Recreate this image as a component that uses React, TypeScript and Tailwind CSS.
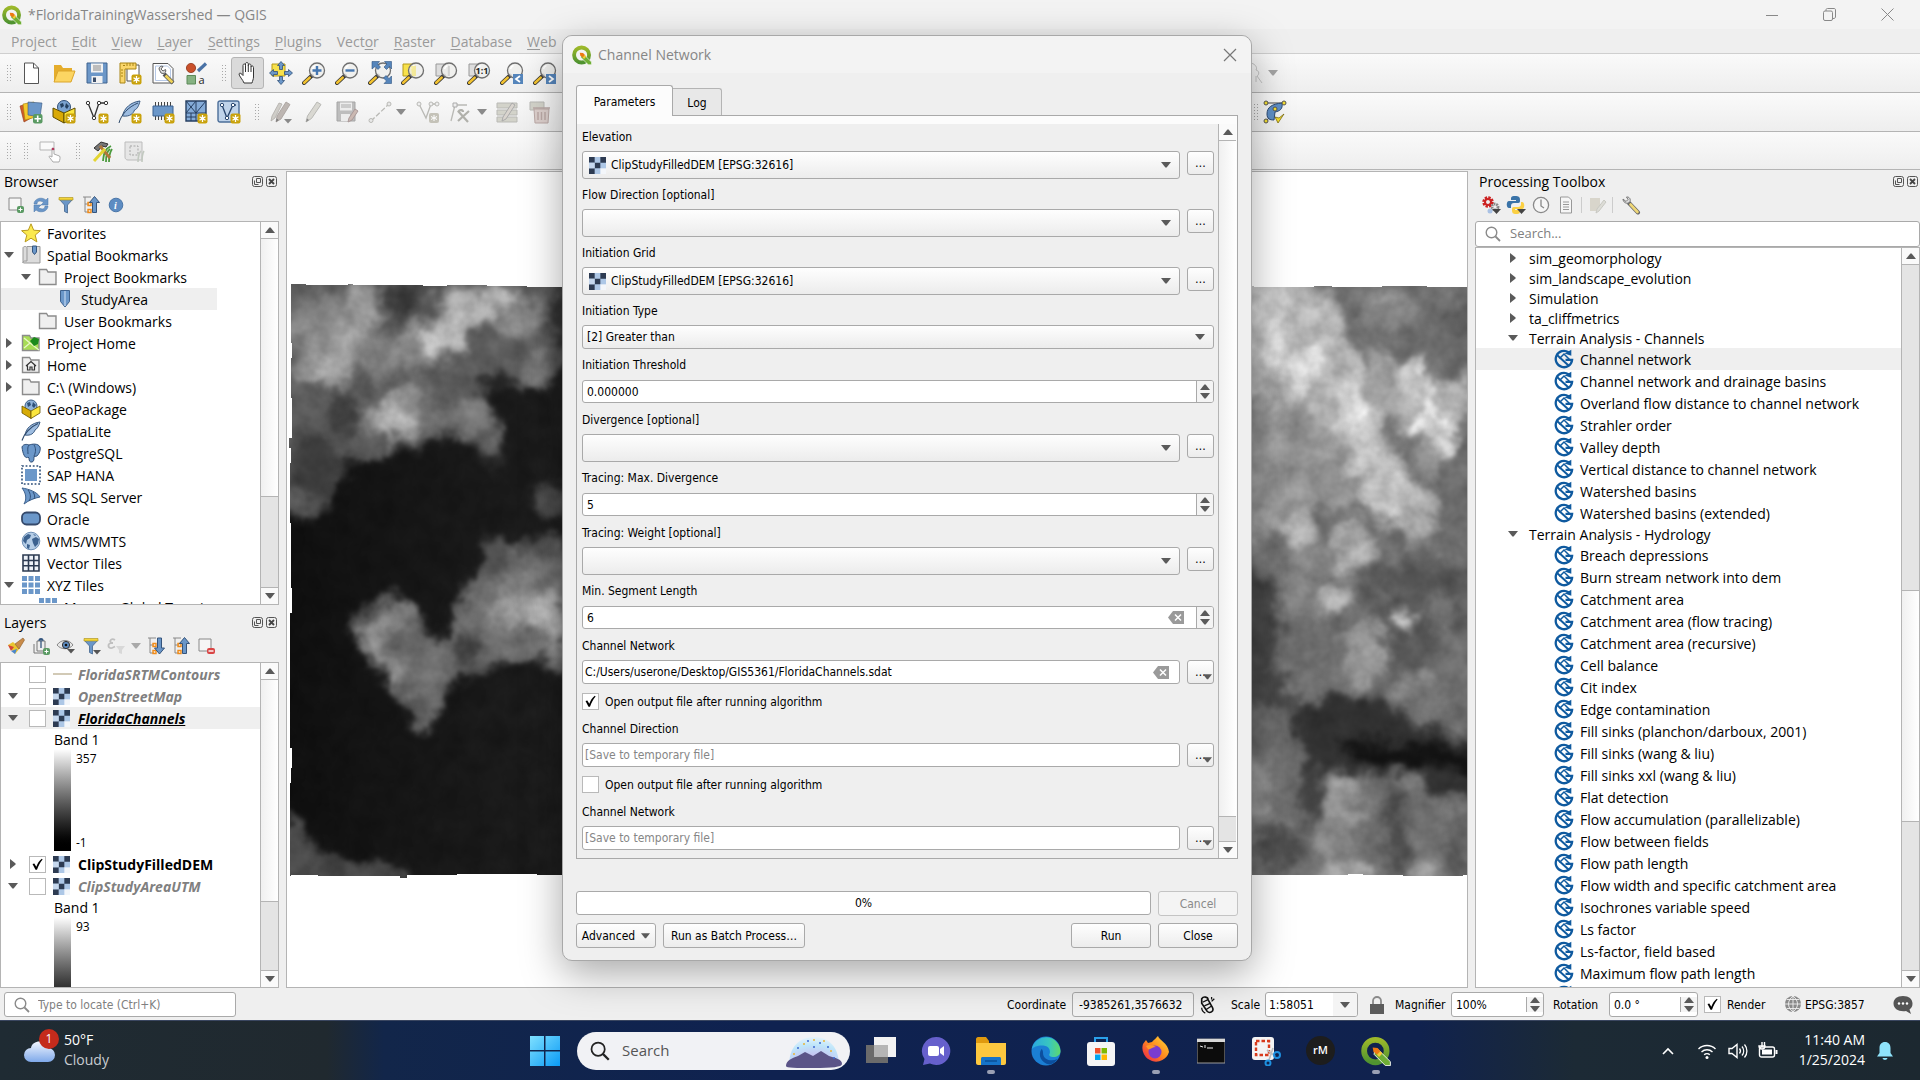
import React from "react";

type Kids = { children?: React.ReactNode };

/* ---------- small drawing helpers ---------- */

function Ic({ children, s = 24, vb = 24 }: Kids & { s?: number; vb?: number }) {
  return (
    <svg width={s} height={s} viewBox={`0 0 ${vb} ${vb}`} fill="none" aria-hidden="true" className="shrink-0">
      {children}
    </svg>
  );
}

const Down = ({ c = "#5a5a5a", w = 10 }: { c?: string; w?: number }) => (
  <svg width={w} height={6} viewBox="0 0 10 6" aria-hidden="true" className="shrink-0"><path d="M0 0h10L5.6 5.6h-1.2z" fill={c} /></svg>
);
const Up = ({ w = 10 }: { w?: number }) => (
  <svg width={w} height={6} viewBox="0 0 10 6" aria-hidden="true" className="shrink-0"><path d="M0 6h10L5.6 .4h-1.2z" fill="#5a5a5a" /></svg>
);
const Right = () => (
  <svg width={6} height={10} viewBox="0 0 6 10" aria-hidden="true"><path d="M0 0v10l5.6-4.4v-1.2z" fill="#5a5a5a" /></svg>
);

const Star = () => (
  <g>
    <rect x="13.500" y="13.500" width="10" height="10" rx="2" fill="#c9a20c" />
    <path d="M18.500 15v7M15.500 16.800l6 3.400M21.500 16.800l-6 3.400" stroke="#fff" strokeWidth="1.300" />
    <circle cx="18.500" cy="18.500" r="1.600" fill="#fff" />
  </g>
);

const Lens = ({ children }: Kids) => (
  <g>
    <path d="M2 22l8-7.500" stroke="#333" strokeWidth="4" strokeLinecap="round" />
    <path d="M2.200 21.800l5.500-5.200" stroke="#f2c230" strokeWidth="2.600" strokeLinecap="round" />
    <circle cx="15" cy="9.500" r="7.500" fill="#eeeeec" fillOpacity=".85" stroke="#6f6f6f" strokeWidth="1.300" />
    <path d="M10.500 8a5 5 0 0 1 3-3.500" stroke="#fff" strokeWidth="1.400" />
    {children}
  </g>
);

const QLogo = ({ s }: { s: number }) => (
  <Ic s={s}>
    <defs>
      <linearGradient id="qg" x1="0" y1="0" x2="0" y2="1"><stop offset="0" stopColor="#9cb82a" /><stop offset="1" stopColor="#4f9330" /></linearGradient>
    </defs>
    <circle cx="11.500" cy="12" r="9" stroke="url(#qg)" strokeWidth="4.600" />
    <path d="M11 11l3 .2 9.500 9.300v3.200h-4l-9-9z" fill="#6fae35" stroke="#fff" strokeWidth=".7" />
    <path d="M9.300 9.200l4 .4 2.200 2.500-2.800 2.800-2.800-2.600z" fill="#ee7913" />
    <path d="M12.700 14.900l2.800-2.800 1.700 1.700-2.700 2.900z" fill="#f8c832" />
  </Ic>
);

const Raster = ({ s = 17 }: { s?: number }) => (
  <Ic s={s} vb={18}>
    <path d="M0 0h18v18H0z" fill="#adc7e6" />
    <path d="M0 0h6v6H0zM12 0h6v6h-6zM6 6h6v6H6zM0 12h6v6H0z" fill="#2d3b52" />
    <path d="M12 12h6v6h-6z" fill="#f3f6fa" />
    <path d="M0 6h6v6H0z" fill="#c6d8ee" />
  </Ic>
);

const Saga = () => (
  <Ic s={20} vb={20}>
    <path d="M14.500 3.200A8.200 8.200 0 1 0 18.100 10.800H11.500" stroke="#0f5a9f" strokeWidth="2.300" />
    <path d="M10.500 4.600l6.800-3.800v6z" fill="#0f5a9f" />
    <path d="M3 6l11.500 10.500" stroke="#0f5a9f" strokeWidth="2" />
    <path d="M5.500 9.500l4.500-4.500 5.500 5.500" stroke="#0f5a9f" strokeWidth="1.500" />
  </Ic>
);

const Folder = ({ children, c = "#efefef" }: Kids & { c?: string }) => (
  <Ic s={20} vb={20}>
    <path d="M1.500 2.500h7l1.500 2.500h8v12.500h-16.500z" fill={c} stroke="#8c8c8c" strokeWidth="1.400" />
    {children}
  </Ic>
);

const Globe = ({ s = 20 }: { s?: number }) => (
  <Ic s={s} vb={20}>
    <circle cx="10" cy="10" r="8.800" fill="#b5cde6" stroke="#6d8fb5" />
    <path d="M3 6l4-3 3 1-1 3-3 2-1 4-3-3zM11 8l4-2 3 2-1 5-3 3-2-4zM6 13l3 1-1 4-2-1zM12 3l3 1-1 1z" fill="#3c628f" />
  </Ic>
);

const GeoPack = ({ s = 20 }: { s?: number }) => (
  <Ic s={s} vb={20}>
    <circle cx="10" cy="7" r="6" fill="#8fb3d9" stroke="#3c5f88" />
    <path d="M6 4l3-1 1 3-3 2zM12 3l3 3-2 3-2-2z" fill="#2e5078" />
    <path d="M1 7l9 5v7.500L1 14z" fill="#d7ab06" stroke="#6b5600" strokeWidth=".8" />
    <path d="M19 7l-9 5v7.500l9-5.500z" fill="#fbe63e" stroke="#6b5600" strokeWidth=".8" />
  </Ic>
);

const Feather = ({ s = 20 }: { s?: number }) => (
  <Ic s={s} vb={20}>
    <path d="M19 1C11 2 5 7 4 14c6 1 9-2 10-5 2-1 4-4 5-8z" fill="#9dbce0" stroke="#3b5a80" />
    <path d="M1 19.500C3 13 9 6 17 2.500" stroke="#2f4a6c" strokeWidth="1.200" />
  </Ic>
);

const FilterIc = ({ s = 20, menu = false }: { s?: number; menu?: boolean }) => (
  <Ic s={s} vb={20}>
    <path d="M3 4h14l-5.500 6v8l-3-1.500V10z" fill="#6a96c8" stroke="#43658d" strokeWidth=".8" />
    <path d="M3 2.500h14v2.500H3z" fill="#f3d53a" stroke="#a88d16" strokeWidth=".6" />
    {menu && <path d="M12 14h8l-4 4.500z" fill="#555" />}
  </Ic>
);

const TreeArrow = ({ up }: { up: boolean }) => (
  <Ic s={20} vb={20}>
    <path d="M2 2h8M4 2v15h4M4 9h4" stroke="#888" />
    <path d="M7 7.500h3v3H7zM7 14.500h3v3H7z" stroke="#f28c18" strokeWidth="1.400" />
    {up ? <path d="M13.500 1.500l5 6h-3v10h-4v-10h-3z" fill="#6a96c8" stroke="#35547c" /> : <path d="M13.500 18l5-6h-3V2h-4v10h-3z" fill="#6a96c8" stroke="#35547c" />}
  </Ic>
);

/* ---------- shared widgets ---------- */

const Handle = ({ w = "w-[14px]" }: { w?: string }) => (
  <div className={`flex shrink-0 items-center justify-center pl-1 ${w}`}>
    <div className="h-[18px] w-[6px] bg-[radial-gradient(#a8a8a8_1px,transparent_1px)] bg-[size:3px_3px]" />
  </div>
);

function TB({ label, children, on = false, w = "w-[33px]" }: Kids & { label: string; on?: boolean; w?: string }) {
  return (
    <button aria-label={label} className={`flex h-8 shrink-0 items-center justify-center ${w} ${on ? "rounded-[3px] border border-[#b5b5b5] bg-[#dadada]" : ""}`}>
      {children}
    </button>
  );
}

function ScrollBar({ before, thumb, after }: { before: string; thumb: string; after: string }) {
  return (
    <div className="flex w-[18px] shrink-0 flex-col border-l border-[#b4b4b4] bg-[#e4e4e4]">
      <button aria-label="Scroll up" className="flex h-[17px] shrink-0 items-center justify-center border-b border-[#b4b4b4] bg-[#fafafa]"><Up /></button>
      <div className={before} />
      <div className={`border-[#b4b4b4] bg-linear-to-r from-[#f0f0f0] to-white ${thumb}`} />
      <div className={after} />
      <button aria-label="Scroll down" className="flex h-[17px] shrink-0 items-center justify-center border-t border-[#b4b4b4] bg-[#fafafa]"><Down /></button>
    </div>
  );
}

function DockTitle({ text }: { text: string }) {
  return (
    <div className="flex h-[20px] shrink-0 items-center gap-[3px] pr-[2px] pl-[4px]">
      <h2 className="flex-1 text-[14px]">{text}</h2>
      <button aria-label={`Float ${text}`}>
        <Ic s={11} vb={11}><rect x=".5" y=".5" width="10" height="10" rx="2" stroke="#555" /><path d="M4.500 2.500h4v4h-4zM2.500 4.500v4h4" stroke="#555" /></Ic>
      </button>
      <button aria-label={`Close ${text}`}>
        <Ic s={11} vb={11}><rect x=".5" y=".5" width="10" height="10" rx="2" stroke="#555" /><path d="M3 3l5 5M8 3l-5 5" stroke="#444" strokeWidth="1.800" /></Ic>
      </button>
    </div>
  );
}

const DockTools = ({ children }: Kids) => (
  <div className="flex h-[30px] shrink-0 items-center gap-[5px] pb-[3px] pl-[6px]">{children}</div>
);

function Check({ id, checked = false }: { id: string; checked?: boolean }) {
  return (
    <span className="relative inline-flex h-[17px] w-[17px] shrink-0">
      <input id={id} aria-label={id} type="checkbox" defaultChecked={checked} className="peer h-[17px] w-[17px] appearance-none border border-[#b9b9b9] bg-white" />
      <svg viewBox="0 0 17 17" className="pointer-events-none absolute inset-0 hidden peer-checked:block" aria-hidden="true">
        <path d="M3.500 8l1.800-.5 2 3.200C8.500 7.500 10 5 12.800 2.800l.8.7C11 6.500 9.500 9.500 8 13.800H6.500z" fill="#000" />
      </svg>
    </span>
  );
}

/* ---------- toolbars ---------- */

const gray = "#b9b9b5";

function Toolbars() {
  const bar = "flex items-center border-b border-[#b4b4b4] bg-linear-to-b from-[#fafafa] to-[#eeeeee]";
  return (
    <div>
      <div className={`${bar} h-[39px]`}>
        <Handle />
        <TB label="New project"><Ic><path d="M5.500 2h9l5 5v15.500h-14z" fill="#fff" stroke="#555" /><path d="M14.500 2v5h5" stroke="#555" /></Ic></TB>
        <TB label="Open project"><Ic><path d="M2 21V4h7l2 3h9v4" fill="#e5ad2c" /><path d="M2 21l4-11h17l-4 11z" fill="#fcd562" stroke="#dba52a" /></Ic></TB>
        <TB label="Save project"><Ic><path d="M2 2h20v20H2z" fill="#6c97c8" stroke="#3f628e" /><path d="M6 2.500h12v9H6zM6.500 15h11v7h-11z" fill="#f2f2f2" /><path d="M8 5h8M8 7h8M8 9h8" stroke="#888" /><path d="M8 16.500h3V21H8z" fill="#3d4f6b" /></Ic></TB>
        <TB label="New print layout"><Ic><path d="M9 4h12v16H9z" fill="#fff" stroke="#555" /><path d="M2 2h16v6H7v14H2z" fill="#fad66b" stroke="#a88414" /><path d="M5 4.500h2M5 9h-2M5 12h-2M5 15h-2M9 2v3M12 2v3M15 2v3" stroke="#a88414" /><Star /></Ic></TB>
        <TB label="Layout manager"><Ic><path d="M2 2.500h15l5 5V22H2z" fill="#fff" stroke="#555" /><path d="M4.500 5h12l3 3v11.500h-15z" stroke="#b6c8e6" /><path d="M8 8c0-2 2-3.500 4-2.500L10 8l2 2 2.500-1.500c1 2-.5 4-2.500 4L10 12z" fill="#ddd" stroke="#555" strokeWidth=".9" /><path d="M13 13l9 9" stroke="#555" strokeWidth="4" /><path d="M14.500 14.500L21.500 21.500" stroke="#efd258" strokeWidth="2.600" /></Ic></TB>
        <TB label="Style manager"><Ic><circle cx="7" cy="7" r="4.600" fill="#c9502b" stroke="#8f3417" strokeWidth=".8" /><path d="M14 10l8-7.500" stroke="#4a72a6" strokeWidth="3.200" /><path d="M3 14.500h8.500V23H3z" fill="#86b282" stroke="#5c8a59" /><text x="14.500" y="22.500" fontSize="11" fontFamily="Open Sans" fill="#222">a</text></Ic></TB>
        <Handle w="w-[19px]" />
        <TB label="Pan map" on><Ic><path d="M8 22c-1-3-5-7-5-9 .5-1.500 2-1 4 1.500V4.500c0-2 2.500-2 2.500 0V3c0-2 2.800-2 2.800 0v1.500c0-2 2.700-2 2.700 0V6c.3-1.600 2.500-1.400 2.500.6V16c0 2-1 4-1.500 6z" fill="#fff" stroke="#333" /><path d="M9.500 4.500V11M12.300 4v7M15 6v5" stroke="#333" /></Ic></TB>
        <TB label="Pan to selection"><Ic><path d="M3 3h13v12H3z" fill="#f7e14b" stroke="#b49a1a" /><path d="M12 .5l3.500 4h-2v4h-3v-4h-2zM12 23.500l3.500-4h-2v-4h-3v4h-2zM.5 12l4-3.500v2h4v3h-4v2zM23.500 12l-4-3.500v2h-4v3h4v2z" fill="#6b97c9" stroke="#30507a" strokeWidth=".8" /></Ic></TB>
        <TB label="Zoom in"><Ic><Lens><path d="M15 5v9M10.500 9.500h9" stroke="#4576b0" strokeWidth="2.400" /></Lens></Ic></TB>
        <TB label="Zoom out"><Ic><Lens><path d="M10.500 9.500h9" stroke="#4576b0" strokeWidth="2.400" /></Lens></Ic></TB>
        <TB label="Zoom full"><Ic><Lens><path d="M4 .500h7.500L9.500 3l3 3-2.500 2.500-3-3-3 2.500zM23.500 .500h-7l2.500 2.500-3 3 2.500 2.500 3-3 2 2.500zM23.500 22.500h-7.500l2.500-2.500-3-3 2.500-2.500 3 3 2.500-2.500z" fill="#5585bb" stroke="#2f5482" strokeWidth=".6" /></Lens></Ic></TB>
        <TB label="Zoom to selection"><Ic><path d="M2 3h12v12H2z" fill="#f7e14b" stroke="#b49a1a" /><Lens><path d="M10 5h5v10h-4z" fill="#f5e88a" opacity=".8" /></Lens></Ic></TB>
        <TB label="Zoom to layer"><Ic><path d="M2 3h12v12H2z" fill="#ddd" stroke="#999" /><Lens><path d="M15 5v10" stroke="#bbb" /></Lens></Ic></TB>
        <TB label="Zoom to native resolution"><Ic><path d="M2 3h10v12H2z" fill="#ddd" stroke="#999" /><Lens><text x="8.500" y="13" fontSize="9" fontWeight="700" fontFamily="Open Sans" fill="#222">1:1</text></Lens></Ic></TB>
        <TB label="Zoom last"><Ic><Lens /><path d="M13 13h10v10H13z" fill="#5585bb" /><path d="M20 15l-4 3 4 3" stroke="#fff" strokeWidth="1.800" /></Ic></TB>
        <TB label="Zoom next"><Ic><Lens /><path d="M13 13h10v10H13z" fill="#5585bb" /><path d="M16 15l4 3-4 3" stroke="#fff" strokeWidth="1.800" /></Ic></TB>
        <div className="ml-[681px] flex items-center gap-[2px]">
          <Ic><path d="M8 2c4 0 8 4 6 7 4 1 3 5 1 6l5 7M14 15v6" stroke="#c4c4c4" /></Ic>
          <Down c="#a5a5a5" />
        </div>
      </div>
      <div className={`${bar} h-[39px]`}>
        <Handle />
        <TB label="Data source manager"><Ic><path d="M1 6l10-3 3 14-9 5z" fill="#d05a2a" stroke="#8f3b15" strokeWidth=".6" /><path d="M4 4l11-2 2 15-11 3z" fill="#f4c92c" stroke="#a8850c" strokeWidth=".6" /><path d="M9 2l14 1-2 14-12-2z" fill="#6b97c9" stroke="#35567f" strokeWidth=".6" /><rect x="14" y="14" width="9.500" height="9.500" rx="2" fill="#5a9a63" /><path d="M18.700 15.500v6.500M15.500 18.700h6.500" stroke="#fff" strokeWidth="1.600" /></Ic></TB>
        <TB label="New GeoPackage layer"><Ic><circle cx="12" cy="7" r="6.500" fill="#7ba3d0" stroke="#2f4f78" /><path d="M8 4l3-1 1 3-3 2zM14 3l3 3-2 3-2-2z" fill="#24405f" /><path d="M1 8l11 5v10L1 17z" fill="#d9a905" stroke="#5f4d00" /><path d="M23 8l-11 5v10l11-6z" fill="#fbe63e" stroke="#5f4d00" /><Star /></Ic></TB>
        <TB label="New shapefile layer"><Ic><path d="M3 3l6 15 5-15h8" stroke="#333" strokeWidth="1.300" /><circle cx="3" cy="3" r="1.700" fill="#fff" stroke="#333" /><circle cx="9" cy="18" r="1.700" fill="#fff" stroke="#333" /><circle cx="14" cy="3" r="1.700" fill="#fff" stroke="#333" /><circle cx="21" cy="3" r="1.700" fill="#fff" stroke="#333" /><Star /></Ic></TB>
        <TB label="New SpatiaLite layer"><Ic><path d="M22 1C13 2 6 8 4.500 16c8 1 11-3 12-6 3-1 4.500-5 5.500-9z" fill="#9dbce0" stroke="#3b5a80" /><path d="M1 23C3 15 10 7 20 3" stroke="#2f4a6c" /><Star /></Ic></TB>
        <TB label="New temporary scratch layer"><Ic><path d="M4.500 2v18M7.500 2v18M10.500 2v18M13.500 2v18M16.500 2v18M19.500 2v18" stroke="#444" /><path d="M2 6h20v10H2z" fill="#6b97c9" stroke="#3b608f" /><Star /></Ic></TB>
        <TB label="New mesh layer"><Ic><path d="M2 1h20v20H2z" fill="#84abd8" stroke="#263f61" strokeWidth="1.400" /><path d="M2 13h20M12 1v20M2 1l10 12L22 1M12 1L2 13M2 17h10M7 13v8" stroke="#263f61" /><Star /></Ic></TB>
        <TB label="New virtual layer"><Ic><rect x="1" y="1" width="21" height="21" rx="2" fill="#bfd3ea" stroke="#4b6d98" strokeWidth="1.400" /><path d="M5 5l5 13 6-13h3" stroke="#29466e" strokeWidth="1.300" /><circle cx="5" cy="5" r="1.700" fill="#fff" stroke="#29466e" /><circle cx="10" cy="18" r="1.700" fill="#fff" stroke="#29466e" /><circle cx="16" cy="5" r="1.700" fill="#fff" stroke="#29466e" /><Star /></Ic></TB>
        <Handle w="w-[19px]" />
        <TB label="Current edits"><Ic><path d="M2 21l1-5L10 3l3 1-7 14z" fill="#cfcdc8" stroke="#b0aca8" strokeWidth=".8" /><path d="M7 22l1-6L17 2l4 2.500L12 19z" fill="#bdb6b2" stroke="#a59d99" strokeWidth=".8" /><path d="M7 22l.6-3.500 2 1.500z" fill="#777" /><path d="M15 19h8l-4 4.500z" fill="#888" /></Ic></TB>
        <TB label="Toggle editing"><Ic><path d="M4 22l1.500-6L15 2l4 2.500-9.500 14z" fill="#d9d8d2" stroke={gray} /><path d="M4 22l1-3.500 2 1.500z" fill="#888" /></Ic></TB>
        <TB label="Save edits"><Ic><path d="M2 2h18v19H2z" fill="#bdbdbd" stroke="#a5a5a5" /><path d="M5 2.500h12v8H5zM6 14h9v7H6z" fill="#ececec" /><path d="M6 5h10M6 7h10" stroke="#aaa" /><path d="M13 22l1-4 6-9 3 2-6 9z" fill="#cbb9b2" stroke="#a99" /></Ic></TB>
        <TB label="Add feature"><Ic><path d="M3 21L21 4" stroke={gray} strokeDasharray="5 2" strokeWidth="1.300" /><circle cx="3" cy="20.500" r="2" fill="#e8e8e8" stroke={gray} /><circle cx="21" cy="4" r="2" fill="#e8e8e8" stroke={gray} /></Ic></TB>
        <div className="w-[15px]"><Down c="#8a8a8a" /></div>
        <TB label="Add polygon"><Ic><path d="M3 4l7 14 5-14h7" stroke={gray} strokeWidth="1.300" /><circle cx="3" cy="4" r="2" fill="#eee" stroke={gray} /><circle cx="15" cy="4" r="2" fill="#eee" stroke={gray} /><circle cx="21" cy="4" r="2" fill="#eee" stroke={gray} /><rect x="13" y="13" width="10" height="10" rx="2" fill="#c4c2b8" /><path d="M18 15v6M15 16.500l6 3M21 16.500l-6 3" stroke="#fff" /></Ic></TB>
        <TB label="Vertex tool"><Ic><path d="M2 21L6 5h12" stroke={gray} strokeWidth="1.300" /><path d="M4 3h4v4H4z" fill="#eee" stroke="#aaa" /><path d="M9 11l10 11M20 11L9 21M9 12c2-3 5-2 5 0" stroke="#b0b0aa" strokeWidth="2.200" /></Ic></TB>
        <div className="w-[13px]"><Down c="#8a8a8a" /></div>
        <TB label="Modify attributes"><Ic><path d="M2 3h20v5H2zM2 10h20v5H2zM2 17h20v5H2z" fill="#d3d3ca" stroke={gray} /><path d="M7 21l1-4L17 3l3 2-9 14z" fill="#d9d4ce" stroke="#aaa" /></Ic></TB>
        <TB label="Delete selected"><Ic><path d="M2 2h14v8H2z" fill="#d3d3ca" stroke={gray} /><path d="M6 9h15l-1 14H7z" fill="#ddd0cd" stroke="#bba9a6" /><path d="M5 8h17M10 12v8M13.500 12v8M17 12v8" stroke="#bba9a6" strokeWidth="1.400" /></Ic></TB>
        <div className="ml-[692px] flex items-center">
          <Handle w="w-[12px]" />
          <TB label="Topology checker" w="w-[30px]"><Ic><path d="M3 3l18 0M3 22l8-12" stroke="#444" /><path d="M4 14c0-7 5-10 15-11 1 6-2 8-7 9l-1 8c-4 0-7-1-7-6z" fill="#5f8fc6" stroke="#2c4a72" /><path d="M12 17l3 6 6-9-5 4z" fill="#f6e030" stroke="#6b5a00" strokeWidth=".7" /><circle cx="3" cy="3" r="2" fill="#f6e030" stroke="#555" /><circle cx="21" cy="3" r="2" fill="#f6e030" stroke="#555" /><circle cx="12" cy="9" r="2" fill="#f6e030" stroke="#555" /><circle cx="3" cy="21" r="2" fill="#f6e030" stroke="#555" /></Ic></TB>
        </div>
      </div>
      <div className={`${bar} h-[38px]`}>
        <Handle />
        <Handle w="w-[19px]" />
        <TB label="Edit in place"><Ic><path d="M2 3h14v8H2z" fill="#fafafa" stroke="#b5b5b5" /><path d="M14 10v8l-2-1c-1.500 0-1 1.500 0 2l3 4h6c1-2 1.500-5 .5-6L16 15v-5c0-1.300-2-1.300-2 0z" fill="#fff" stroke="#aaa" /><circle cx="15" cy="10" r="1.300" fill="#b33a5e" /></Ic></TB>
        <Handle w="w-[20px]" />
        <TB label="GRASS tools"><Ic><path d="M12 22c1-9 2-12 8-15M15 23c0-7 1-11 4-13M18 23c0-6 1-10 3-13" stroke="#4a9a3c" strokeWidth="1.800" /><path d="M3 9l7-6 7 2-2 3-4-1-4 5z" fill="#777" stroke="#333" /><path d="M9 7l10 12" stroke="#b0773a" strokeWidth="3" /><path d="M3 22l11-12" stroke="#e3d532" strokeWidth="3" /></Ic></TB>
        <TB label="GRASS region" w="w-[29px]"><Ic><path d="M3 3h17v18H6c-3 0-3-3-3-3z" fill="#e6e6e6" stroke="#bcbcbc" /><path d="M8 7h8v9H8z" stroke="#a5a5a5" strokeDasharray="2 1.500" /><path d="M16 23c0-6 1-9 3-11M20 23c0-5 0-8 2-11" stroke="#c2c9c0" strokeWidth="1.600" /></Ic></TB>
      </div>
    </div>
  );
}

/* ---------- browser dock ---------- */

type BrowserRow = { t: string; d?: 0 | 1 | 2; a?: "open" | "shut"; icon: React.ReactNode; sel?: boolean };

const grid9 = (
  <Ic s={20} vb={20}><path d="M1 1h5v5H1zM7.500 1h5v5h-5zM14 1h5v5h-5zM1 7.500h5v5H1zM7.500 7.500h5v5h-5zM14 7.500h5v5h-5zM1 14h5v5H1zM7.500 14h5v5h-5zM14 14h5v5h-5z" fill="#6b97c9" /></Ic>
);

const browserRows: BrowserRow[] = [
  { t: "Favorites", icon: <Ic s={20} vb={20}><path d="M10 .8l2.700 6.400 6.700.5-5.200 4.400 1.700 6.800L10 15.200l-5.900 3.700 1.700-6.800L.6 7.700l6.700-.5z" fill="#fbe94d" stroke="#b99a1e" /></Ic> },
  { t: "Spatial Bookmarks", a: "open", icon: <Ic s={20} vb={20}><path d="M2 3l4-2v15H18V2H10" fill="#e4e4e4" /><path d="M2 3c0-2 4-2 4 0v13H3.500C2 16 2 18 2 18zM6 1.500h13V18H2.500" fill="#dcdcdc" stroke="#999" /><path d="M11.500 1h4v6l-2 2.500-2-2.500z" fill="#6b97c9" stroke="#35567f" /></Ic> },
  { t: "Project Bookmarks", d: 1, a: "open", icon: <Folder /> },
  { t: "StudyArea", d: 2, sel: true, icon: <Ic s={20} vb={20}><path d="M5.500 1.500h9v11L10 18l-4.500-5.500z" fill="#6b97c9" stroke="#3f628e" /><path d="M10 2v15" stroke="#9fbde0" strokeWidth="2" /></Ic> },
  { t: "User Bookmarks", d: 1, icon: <Folder /> },
  { t: "Project Home", a: "shut", icon: <Folder c="#a8dc55"><path d="M3 15l6-5 9 7M9 10L3 5" stroke="#e9f7c8" strokeWidth="1.300" /><path d="M9 8l4-4 5 2-1 5-4 2z" fill="#1c8a1c" /></Folder> },
  { t: "Home", a: "shut", icon: <Folder><path d="M5 11l5-4.500 5 4.500M6.500 10.500V15h2.500v-3h2v3h2.500v-4.500" stroke="#333" strokeWidth="1.200" /></Folder> },
  { t: "C:\\ (Windows)", a: "shut", icon: <Folder /> },
  { t: "GeoPackage", icon: <GeoPack /> },
  { t: "SpatiaLite", icon: <Feather /> },
  { t: "PostgreSQL", icon: <Ic s={20} vb={20}><path d="M1 4c1-3 5-3 7-2 3-1 9-2 11 2 1 3-1 7-3 9l-3 .5c0 3 0 5-2 5.500-2 .5-3-1-3-4l-1-1c-2 2-5-1-6-10z" fill="#6b97c9" stroke="#2f4f78" /><path d="M8 2c-2 2-1 6-1 9M13 2c2 3 2 7 0 11" stroke="#2f4f78" /></Ic> },
  { t: "SAP HANA", icon: <Ic s={20} vb={20}><path d="M1 1h18v18H1z" stroke="#2f4f78" strokeWidth="1.600" strokeDasharray="1.800 1.800" /><path d="M4 4h12v12H4z" fill="#6b97c9" /></Ic> },
  { t: "MS SQL Server", icon: <Ic s={20} vb={20}><path d="M1 1c7 1 15 4 18 9-5 1-11 3-16 7 3-5 2-11-2-16z" fill="#6b97c9" stroke="#3f628e" /><path d="M7 3c3 4 3 8 1 11M12 5c2 3 2 5 1 7" stroke="#2f4f78" /></Ic> },
  { t: "Oracle", icon: <Ic s={20} vb={20}><rect x="1" y="3.500" width="18" height="12" rx="4.500" fill="#6b97c9" stroke="#35496b" strokeWidth="1.800" /></Ic> },
  { t: "WMS/WMTS", icon: <Globe /> },
  { t: "Vector Tiles", icon: <Ic s={20} vb={20}><path d="M2 2h16v16H2z" fill="#eef2f8" /><path d="M2 2h16v16H2zM7.500 2v16M12.800 2v16M2 7.500h16M2 12.800h16" stroke="#2d3b52" strokeWidth="1.600" /></Ic> },
  { t: "XYZ Tiles", a: "open", icon: grid9 },
  { t: "Mapzen Global Terrain", d: 1, icon: grid9 },
];

const indents = ["pl-0", "pl-[17px]", "pl-[34px]"];

function Browser() {
  return (
    <section className="flex h-[434px] shrink-0 flex-col">
      <DockTitle text="Browser" />
      <DockTools>
        <button aria-label="Add layer"><Ic s={20} vb={20}><path d="M3 3h12v12H3z" fill="#f6f6f6" stroke="#888" /><rect x="11" y="11" width="7" height="7" rx="2" fill="#5a9a63" /><path d="M14.500 12.500v4M12.500 14.500h4" stroke="#fff" /></Ic></button>
        <button aria-label="Refresh"><Ic s={20} vb={20}><path d="M3 9c0-5 7-8 12-4l2-2v7h-7l2.500-2.500C9 5 6 6 6 9zM17 11c0 5-7 8-12 4l-2 2v-7h7l-2.500 2.500C11 15 14 14 14 11z" fill="#6a96c8" stroke="#4a76a8" strokeWidth=".5" /></Ic></button>
        <button aria-label="Filter browser"><FilterIc /></button>
        <button aria-label="Collapse all"><TreeArrow up /></button>
        <button aria-label="Properties"><Ic s={20} vb={20}><circle cx="10" cy="10" r="6.800" fill="#5d8cc2" stroke="#4a76a8" /><text x="8" y="14" fontSize="10" fontStyle="italic" fontWeight="700" fontFamily="Liberation Serif" fill="#fff">i</text></Ic></button>
      </DockTools>
      <div className="flex min-h-0 flex-1 border border-[#b4b4b4] bg-white">
        <ul className="min-w-0 flex-1 overflow-hidden">
          {browserRows.map((r) => (
            <li key={r.t} className={`flex h-[22px] items-center ${indents[r.d ?? 0]} ${r.sel ? "mr-[43px] bg-[#efefef]" : ""}`}>
              <span className="flex w-[20px] shrink-0 justify-center pr-1">{r.a === "open" ? <Down /> : r.a === "shut" ? <Right /> : null}</span>
              {r.icon}
              <span className="ml-[6px] whitespace-nowrap">{r.t}</span>
            </li>
          ))}
        </ul>
        <ScrollBar before="h-0" thumb="h-[258px] border-b" after="flex-1" />
      </div>
    </section>
  );
}

/* ---------- layers dock ---------- */

function LayerRow({ name, arrow, checked, cls = "", sel, line }: { name: string; arrow?: "open" | "shut"; checked?: boolean; cls?: string; sel?: boolean; line?: boolean }) {
  return (
    <li className={`flex h-[22px] items-center ${sel ? "bg-[#efefef]" : ""}`}>
      <span className="flex w-[28px] shrink-0 justify-center pr-1">{arrow === "open" ? <Down /> : arrow === "shut" ? <Right /> : null}</span>
      <Check id={name} checked={checked} />
      <span className="ml-[7px] flex w-[19px] shrink-0">{line ? <span className="h-[2px] w-full bg-[#d2cab6]" /> : <Raster />}</span>
      <label htmlFor={name} className={`ml-[6px] font-bold whitespace-nowrap ${cls}`}>{name}</label>
    </li>
  );
}

function Band({ top, bottom }: { top: string; bottom?: string }) {
  return (
    <li className="pl-[53px]">
      <div className="h-[20px] leading-[22px]">Band 1</div>
      <div className="flex h-[104px] gap-[5px] pb-[2px]">
        <span className="w-[17px] bg-linear-to-b from-white to-black" />
        <span className="flex flex-col justify-between pt-[2px] text-[12px] leading-4">
          <span>{top}</span>
          {bottom && <span>{bottom}</span>}
        </span>
      </div>
    </li>
  );
}

function Layers() {
  return (
    <section className="flex min-h-0 flex-1 flex-col pt-[7px]">
      <DockTitle text="Layers" />
      <DockTools>
        <button aria-label="Open layer styling"><Ic s={20} vb={20}><path d="M2 9l5-3 7 6-5 6z" fill="#e9c531" /><path d="M2 9l3 6 3-4z" fill="#d64534" /><path d="M5 15l4 3 2-5z" fill="#4a86d0" /><path d="M9 8l8-6 1.500 2L13 13z" fill="#c98b4a" stroke="#8a5a24" strokeWidth=".6" /></Ic></button>
        <button aria-label="Add group"><Ic s={20} vb={20}><path d="M6 5h8v10H6zM3 8v9h9" fill="#eee" stroke="#777" /><path d="M10 12V3M8 5c0-3 4-3 4 0" stroke="#35567f" strokeWidth="1.300" /><rect x="12" y="12" width="7" height="7" rx="2" fill="#5a9a63" /><path d="M15.500 13.500v4M13.500 15.500h4" stroke="#fff" /></Ic></button>
        <button aria-label="Manage map themes"><Ic s={20} vb={20}><path d="M1 9c4-6 12-6 16 0-4 5-12 5-16 0z" fill="#e6e6e6" stroke="#888" /><circle cx="10" cy="9" r="3.600" fill="#5d8cc2" stroke="#333" /><circle cx="10" cy="9" r="1.300" fill="#111" /><path d="M11 13h8l-4 4.500z" fill="#555" /></Ic></button>
        <button aria-label="Filter legend"><FilterIc menu /></button>
        <button aria-label="Filter by expression"><Ic s={20} vb={20}><path d="M9 4C6 2 3 4 5 7c-4 1-3 6 1 5l3-1.500M5 7h2" stroke="#c0c0c0" strokeWidth="1.800" /><path d="M10 10h9l-3 4v4l-3-1v-3z" fill="#d8d8d8" /></Ic></button>
        <Down c="#a9a9a9" />
        <button aria-label="Expand all"><TreeArrow up={false} /></button>
        <button aria-label="Collapse all layers"><TreeArrow up /></button>
        <button aria-label="Remove layer"><Ic s={20} vb={20}><path d="M3 3h12v12H3z" fill="#f6f6f6" stroke="#888" /><rect x="11" y="12" width="8" height="6" rx="2" fill="#d94545" /><path d="M12.500 15h5" stroke="#fff" strokeWidth="1.400" /></Ic></button>
      </DockTools>
      <div className="flex min-h-0 flex-1 border border-[#b4b4b4] bg-white">
        <ul className="min-w-0 flex-1 overflow-hidden">
          <LayerRow name="FloridaSRTMContours" line cls="text-[#808080] italic" />
          <LayerRow name="OpenStreetMap" arrow="open" cls="text-[#808080] italic" />
          <LayerRow name="FloridaChannels" arrow="open" sel cls="italic underline" />
          <Band top="357" bottom="-1" />
          <LayerRow name="ClipStudyFilledDEM" arrow="shut" checked />
          <LayerRow name="ClipStudyAreaUTM" arrow="open" cls="text-[#808080] italic" />
          <Band top="93" />
        </ul>
        <ScrollBar before="h-0" thumb="h-[222px] border-b" after="flex-1" />
      </div>
    </section>
  );
}

/* ---------- map canvas: shaded elevation ---------- */

type Blob = [number, number, number, number, string];

const westPolys: [string, string][] = [
  ["-30,-40 900,-40 900,190 800,300 740,300 640,260 600,300 660,370 650,470 600,450 480,415 400,440 300,470 240,485 190,470 180,540 150,590 90,628 -30,600", "#5c5c5c"],
  ["215,890 240,860 350,820 390,835 440,920 480,940 520,905 570,780 600,760 620,690 650,675 700,710 740,700 770,670 870,700 870,1025 800,995 700,985 640,1000 520,1030 500,1060 460,1150 430,1165 390,1140 370,1090 300,1010 245,950", "#6c6c6c"],
  ["-30,1400 60,1390 90,1460 200,1490 370,1510 370,1600 -30,1600", "#4c4c4c"],
];
const westBlobs: Blob[] = [
  [130, 180, 110, 110, "#959595"], [240, 130, 60, 110, "#9c9c9c"], [150, 260, 60, 40, "#adadad"], [90, 90, 60, 30, "#7a7a7a"], [50, 210, 25, 50, "#666"],
  [310, 220, 80, 60, "#7c7c7c"], [420, 190, 80, 60, "#929292"], [490, 170, 70, 50, "#c4c4c4"], [540, 110, 60, 60, "#b5b5b5"],
  [650, 85, 80, 45, "#b8b8b8"], [720, 130, 60, 60, "#8c8c8c"], [360, 75, 55, 40, "#333"], [430, 50, 40, 20, "#3a3a3a"],
  [690, 200, 50, 30, "#5a5a5a"], [760, 250, 40, 45, "#7c7c7c"], [850, 120, 40, 90, "#282828"], [660, 280, 60, 20, "#2a2a2a"],
  [190, 370, 35, 70, "#343434"], [300, 380, 60, 50, "#909090"], [345, 375, 60, 50, "#c4c4c4"], [390, 320, 50, 40, "#8c8c8c"],
  [460, 265, 45, 25, "#565656"], [450, 370, 50, 35, "#767676"], [570, 375, 65, 50, "#7c7c7c"], [100, 500, 75, 90, "#363636"],
  [80, 350, 50, 40, "#5c5c5c"], [820, 580, 55, 45, "#525252"], [640, 485, 40, 20, "#2c2c2c"],
  [290, 935, 40, 60, "#949494"], [350, 870, 40, 40, "#808080"], [370, 940, 60, 30, "#5d5d5d"], [440, 1010, 50, 40, "#6a6a6a"],
  [350, 1010, 30, 40, "#8c8c8c"], [265, 885, 25, 25, "#4b4b4b"], [410, 1110, 30, 25, "#4a4a4a"], [560, 960, 35, 45, "#383838"],
  [700, 860, 70, 50, "#a0a0a0"], [730, 810, 60, 40, "#8c8c8c"], [800, 860, 50, 50, "#bcbcbc"], [830, 930, 30, 50, "#a2a2a2"],
  [650, 730, 40, 40, "#4f4f4f"], [770, 700, 60, 30, "#4e4e4e"], [610, 870, 40, 40, "#7a7a7a"], [150, 1515, 50, 20, "#363636"],
];
const eastPolys: [string, string][] = [
  ["-20,-40 150,-40 300,130 380,270 430,360 430,430 390,530 330,520 270,430 240,370 200,330 100,340 -20,300", "#b2b2b2"],
  ["-20,340 200,340 250,380 270,440 330,520 380,560 320,610 240,600 80,660 -20,620", "#929292"],
  ["390,190 450,220 560,340 540,420 480,400 400,340", "#a3a3a3"],
  ["-20,770 110,780 130,900 100,1000 180,1110 -20,1100", "#454545"],
  ["380,760 520,720 700,760 700,820 560,840 600,930 540,1010 460,1060 430,900 380,840", "#575757"],
  ["150,1110 290,1070 420,1080 520,1140 740,1200 740,1340 600,1330 500,1270 300,1270 200,1270", "#313131"],
  ["300,1190 610,1200 740,1245 740,1300 600,1245 480,1265 300,1220", "#121212"],
];
const eastBlobs: Blob[] = [
  [90, 100, 60, 90, "#cbcbcb"], [90, 190, 50, 50, "#d2d2d2"], [190, 250, 60, 50, "#e2e2e2"], [230, 110, 70, 50, "#bababa"],
  [340, 350, 45, 60, "#e4e4e4"], [390, 450, 45, 50, "#d2d2d2"], [290, 300, 50, 40, "#c2c2c2"], [450, 110, 90, 50, "#838383"],
  [440, 60, 60, 20, "#a5a5a5"], [620, 190, 80, 70, "#6a6a6a"], [660, 120, 40, 40, "#575757"], [600, 70, 60, 30, "#777"],
  [520, 280, 60, 40, "#c8c8c8"], [530, 240, 24, 24, "#f2f2f2"], [565, 320, 28, 28, "#ececec"], [585, 380, 52, 44, "#fff"],
  [600, 430, 45, 40, "#dcdcdc"], [650, 320, 50, 60, "#bbb"], [450, 570, 85, 65, "#d4d4d4"], [450, 510, 50, 40, "#c8c8c8"],
  [530, 620, 60, 70, "#b8b8b8"], [340, 700, 60, 70, "#bababa"], [180, 655, 60, 45, "#c2c2c2"], [50, 660, 30, 60, "#a5a5a5"],
  [640, 590, 60, 90, "#6c6c6c"], [560, 490, 50, 40, "#969696"], [440, 440, 30, 30, "#a0a0a0"], [230, 740, 70, 40, "#8c8c8c"],
  [100, 730, 50, 40, "#707070"], [190, 820, 80, 60, "#828282"], [290, 835, 50, 40, "#b8b8b8"], [370, 970, 70, 80, "#9f9f9f"],
  [220, 950, 100, 80, "#6d6d6d"], [210, 1050, 60, 30, "#777"], [495, 892, 26, 30, "#dcdcdc"], [430, 830, 40, 20, "#777"],
  [610, 860, 60, 50, "#6f6f6f"], [640, 980, 60, 80, "#707070"], [515, 1045, 45, 35, "#8c8c8c"], [580, 1090, 60, 35, "#777"],
  [660, 890, 25, 30, "#4d4d4d"], [100, 1190, 80, 60, "#6c6c6c"], [50, 1320, 45, 100, "#8e8e8e"], [210, 1320, 35, 80, "#3a3a3a"],
  [120, 1460, 80, 50, "#474747"], [310, 1350, 70, 70, "#9b9b9b"], [290, 1440, 60, 70, "#8e8e8e"], [390, 1330, 40, 60, "#6e6e6e"],
  [470, 1420, 35, 120, "#484848"], [560, 1410, 60, 90, "#747474"], [320, 1530, 80, 35, "#a6a6a6"], [550, 1530, 50, 35, "#9c9c9c"],
  [650, 1450, 30, 90, "#585858"],
];

function Terrain({ polys, blobs }: { polys: [string, string][]; blobs: Blob[] }) {
  return (
    <g>
      {polys.map(([p, f]) => <polygon key={p} points={p} fill={f} />)}
      {blobs.map(([x, y, rx, ry, f]) => <ellipse key={`${x}-${y}`} cx={x} cy={y} rx={rx} ry={ry} fill={f} fillOpacity=".85" />)}
      {polys.filter(([, f]) => f === "#121212").map(([p, f]) => <polygon key={p + "top"} points={p} fill={f} />)}
    </g>
  );
}

function MapCanvas() {
  return (
    <main className="min-w-0 flex-1 border border-[#b4b4b4] bg-white pt-[111px]">
      <svg viewBox="0 0 1180 595" className="block w-full" role="img" aria-label="Elevation raster">
        <defs>
          <filter id="cloud" x="-60" y="-60" width="1300" height="715" filterUnits="userSpaceOnUse" colorInterpolationFilters="sRGB">
            <feGaussianBlur stdDeviation="5" result="b" />
            <feTurbulence type="fractalNoise" baseFrequency="0.05" numOctaves="5" seed="7" result="n" />
            <feDisplacementMap in="b" in2="n" scale="26" xChannelSelector="R" yChannelSelector="G" result="d" />
            <feGaussianBlur in="d" stdDeviation="1.500" result="s" />
            <feTurbulence type="fractalNoise" baseFrequency="0.045" numOctaves="3" seed="21" />
            <feColorMatrix values="1 0 0 0 0  1 0 0 0 0  1 0 0 0 0  0 0 0 0 1" result="t" />
            <feComposite in="s" in2="t" operator="arithmetic" k1="0.400" k2="0.800" k3="0" k4="0" />
          </filter>
          <linearGradient id="sea" x1="0" y1="0" x2="1" y2="0"><stop offset="0" stopColor="#0a0a0a" /><stop offset=".15" stopColor="#121212" /><stop offset=".45" stopColor="#1c1c1c" /><stop offset="1" stopColor="#202020" /></linearGradient>
          <clipPath id="edge">
            <path d="M4 1h15v1h42v-1h5v1h70v1h24v-1h40v1h40v1h700l10-1h17v1h60v-1h18v1h50v-1h45v1h41V592h-5v1h-60v-1h-40v-1h-15v1h-100v-1h-30v1H250v-1h-80v1h-50v3h-7v-2H31v-1H4v1H3V500h1v-15h1v-20H3V330h2v-25H4V240H3V180h1v-15H2v-10h3v-40H4V75h1V60H4z" />
          </clipPath>
        </defs>
        <g clipPath="url(#edge)">
          <g filter="url(#cloud)">
            <rect x="-60" y="-60" width="740" height="715" fill="url(#sea)" />
            <rect x="680" y="-60" width="560" height="715" fill="#6e6e6e" />
            <g transform="translate(4 2) scale(.3333 .3954) translate(-33 -38)"><Terrain polys={westPolys} blobs={westBlobs} /></g>
            <g transform="translate(953 2) scale(.3333 .3954) translate(0 -38)"><Terrain polys={eastPolys} blobs={eastBlobs} /></g>
          </g>
        </g>
      </svg>
    </main>
  );
}

/* ---------- processing toolbox ---------- */

const toolRows: { t: string; k: "shut" | "open" | "item"; sel?: boolean }[] = [
  { t: "sim_geomorphology", k: "shut" }, { t: "sim_landscape_evolution", k: "shut" }, { t: "Simulation", k: "shut" }, { t: "ta_cliffmetrics", k: "shut" },
  { t: "Terrain Analysis - Channels", k: "open" },
  { t: "Channel network", k: "item", sel: true }, { t: "Channel network and drainage basins", k: "item" }, { t: "Overland flow distance to channel network", k: "item" },
  { t: "Strahler order", k: "item" }, { t: "Valley depth", k: "item" }, { t: "Vertical distance to channel network", k: "item" }, { t: "Watershed basins", k: "item" }, { t: "Watershed basins (extended)", k: "item" },
  { t: "Terrain Analysis - Hydrology", k: "open" },
  { t: "Breach depressions", k: "item" }, { t: "Burn stream network into dem", k: "item" }, { t: "Catchment area", k: "item" }, { t: "Catchment area (flow tracing)", k: "item" }, { t: "Catchment area (recursive)", k: "item" },
  { t: "Cell balance", k: "item" }, { t: "Cit index", k: "item" }, { t: "Edge contamination", k: "item" }, { t: "Fill sinks (planchon/darboux, 2001)", k: "item" }, { t: "Fill sinks (wang & liu)", k: "item" },
  { t: "Fill sinks xxl (wang & liu)", k: "item" }, { t: "Flat detection", k: "item" }, { t: "Flow accumulation (parallelizable)", k: "item" }, { t: "Flow between fields", k: "item" }, { t: "Flow path length", k: "item" },
  { t: "Flow width and specific catchment area", k: "item" }, { t: "Isochrones variable speed", k: "item" }, { t: "Ls factor", k: "item" }, { t: "Ls-factor, field based", k: "item" }, { t: "Maximum flow path length", k: "item" },
  { t: "", k: "item" },
];

const SearchIc = ({ s = 16, c = "#8a8a8a" }: { s?: number; c?: string }) => (
  <Ic s={s} vb={16}><circle cx="6.500" cy="6.500" r="5.300" stroke={c} strokeWidth="1.400" /><path d="M10.500 10.500l4.500 4.500" stroke={c} strokeWidth="1.800" /></Ic>
);

function Toolbox() {
  return (
    <section className="flex w-[445px] shrink-0 flex-col">
      <DockTitle text="Processing Toolbox" />
      <DockTools>
        <button aria-label="Models"><Ic s={20} vb={20}><circle cx="7" cy="7" r="4" stroke="#cc2222" strokeWidth="3.500" strokeDasharray="2.100 1" /><circle cx="7" cy="7" r="3" stroke="#cc2222" strokeWidth="2" /><circle cx="14" cy="12" r="3" stroke="#888" strokeWidth="2.800" strokeDasharray="1.700 .8" /><circle cx="9" cy="16" r="2.500" fill="#a9c1e4" /><path d="M11 14h9l-4.500 5z" fill="#444" /></Ic></button>
        <button aria-label="Scripts"><Ic s={20} vb={20}><path d="M9 1c-4 0-4 1-4 4h5v1H3c-3 0-3 7 0 7h2v-2c0-2 1-3 3-3h4c2 0 2-1 2-3 0-3-1-4-5-4z" fill="#3a73a8" /><path d="M10 19c4 0 4-1 4-4H9v-1h7c3 0 3-7 0-7h-1v2c0 2-1 3-3 3H8c-2 0-2 1-2 3 0 3 1 4 4 4z" fill="#fbd043" /><path d="M11 14h9l-4.500 5z" fill="#444" /></Ic></button>
        <button aria-label="History"><Ic s={20} vb={20}><circle cx="10" cy="10" r="7.600" fill="#f6f6f6" stroke="#888" strokeWidth="1.300" /><path d="M10 4.500V11l3 2" stroke="#888" strokeWidth="1.300" /></Ic></button>
        <button aria-label="Results viewer"><Ic s={20} vb={20}><path d="M4.500 2h8l3 3v13h-11z" fill="#f6f6f6" stroke="#999" /><path d="M7 7h6M7 9.500h6M7 12h6M7 14.500h6" stroke="#999" strokeWidth="1.200" /></Ic></button>
        <span className="h-4 w-px bg-[#ccc]" />
        <button aria-label="Edit features in place"><Ic s={20} vb={20}><path d="M3 3h10v9l-4 4H3z" fill="#d8d5cb" /><path d="M9 18l1-4 7-9 2 2-7 9z" fill="#dcdcd6" stroke="#c8c8c2" /></Ic></button>
        <span className="h-4 w-px bg-[#ccc]" />
        <button aria-label="Options" className="ml-[3px]"><Ic s={20} vb={20}><path d="M8 8l9 9.500" stroke="#666" strokeWidth="4" strokeLinecap="round" /><path d="M9.500 9.500l7 7.500" stroke="#efd777" strokeWidth="2.600" strokeLinecap="round" /><path d="M2 4c0 3 3 5 5.500 4L9 6.500C10 4 8 1.500 5.500 2L7 4.500 5 6.500z" fill="#ddd" stroke="#777" /></Ic></button>
      </DockTools>
      <div className="flex h-[26px] shrink-0 items-center gap-[9px] rounded-[3px] border border-[#a9a9a9] bg-white pl-[9px]">
        <SearchIc />
        <input aria-label="Search algorithms" placeholder="Search..." className="w-full text-[13px] outline-none placeholder:text-[#808080]" />
      </div>
      <div className="flex min-h-0 flex-1 border border-[#b4b4b4] bg-white">
        <ul className="min-w-0 flex-1 overflow-hidden">
          {toolRows.map((r) =>
            r.k === "item" ? (
              <li key={r.t} className={`flex h-[22px] items-center gap-[6px] pl-[78px] whitespace-nowrap ${r.sel ? "bg-[#efefef]" : ""}`}><Saga />{r.t}</li>
            ) : (
              <li key={r.t} className="flex h-[20px] items-center pl-[30px] whitespace-nowrap"><span className="flex w-[23px] pl-[2px]">{r.k === "shut" ? <span className="pl-[2px]"><Right /></span> : <Down />}</span>{r.t}</li>
            ),
          )}
        </ul>
        <ScrollBar before="h-[325px]" thumb="h-[232px] border-y" after="flex-1" />
      </div>
    </section>
  );
}

/* ---------- dialog ---------- */

const boxBase = "rounded-[3px] border border-[#a9a9a9]";
const btnBg = "bg-linear-to-b from-[#fefefe] to-[#ececec]";

function Label({ id, text }: { id: string; text: string }) {
  return <label htmlFor={id} className="block h-5 leading-[22px]">{text}</label>;
}

function Combo({ id, label, value, browse = true }: { id: string; label: string; value?: string; browse?: boolean }) {
  return (
    <div className="flex flex-col gap-[5px]">
      <Label id={id} text={label} />
      <div className="flex items-start gap-[7px]">
        <div className="relative flex min-w-0 flex-1 items-center">
          <select id={id} className={`w-full appearance-none ${boxBase} ${btnBg} ${browse ? "h-7" : "h-6"} ${browse && value ? "pl-[28px]" : "pl-[4px]"}`}>
            <option>{value ?? ""}</option>
          </select>
          {browse && value && <span className="pointer-events-none absolute left-[7px]"><Raster /></span>}
          <span className="pointer-events-none absolute right-[9px]"><Down /></span>
        </div>
        {browse && <button aria-label={`Browse ${label}`} className={`h-6 w-[27px] leading-5 ${boxBase} ${btnBg}`}>…</button>}
      </div>
    </div>
  );
}

const Clear = () => (
  <Ic s={17} vb={17}><path d="M5 2h11v13H5L0 8.500z" fill="#9a9a9a" /><path d="M7 5.500l6 6M13 5.500l-6 6" stroke="#fff" strokeWidth="1.500" /></Ic>
);

function Spin({ id, label, value, clear = false }: { id: string; label: string; value: string; clear?: boolean }) {
  return (
    <div className="flex flex-col gap-[5px]">
      <Label id={id} text={label} />
      <div className="flex h-[25px] items-center">
        <div className={`flex h-[23px] w-full overflow-hidden bg-white ${boxBase}`}>
          <input id={id} defaultValue={value} className="min-w-0 flex-1 pl-[4px] outline-none" />
          {clear && <button aria-label="Reset value" className="mr-[11px]"><Clear /></button>}
          <SpinArrows />
        </div>
      </div>
    </div>
  );
}

function SpinArrows() {
  return (
    <span className="flex w-[17px] shrink-0 flex-col items-center justify-center gap-[3px] border-l border-[#a9a9a9] bg-[#f4f4f4]">
      <button aria-label="Increase"><Up /></button>
      <button aria-label="Decrease"><Down /></button>
    </span>
  );
}

function Output({ id, label, value, open }: { id: string; label: string; value?: string; open?: boolean }) {
  return (
    <>
      <div className="flex flex-col gap-[5px]">
        <Label id={id} text={label} />
        <div className="flex gap-[7px]">
          <div className={`flex h-6 min-w-0 flex-1 items-center bg-white ${boxBase}`}>
            <input id={id} defaultValue={value} placeholder="[Save to temporary file]" className="min-w-0 flex-1 pl-[2px] outline-none placeholder:text-[#868686]" />
            {value && <button aria-label="Clear path" className="mr-[9px]"><Clear /></button>}
          </div>
          <button aria-label={`Choose file for ${id}`} className={`relative h-6 w-[27px] leading-5 ${boxBase} ${btnBg}`}>…<span className="absolute right-[1px] bottom-[3px]"><Down w={9} /></span></button>
        </div>
      </div>
      {open !== undefined && (
        <div className="flex h-6 items-center gap-[6px] pt-px">
          <Check id={`${id} open`} checked={open} />
          <label htmlFor={`${id} open`}>Open output file after running algorithm</label>
        </div>
      )}
    </>
  );
}

function Dialog() {
  const btn = `h-[25px] ${boxBase} ${btnBg}`;
  return (
    <div role="dialog" aria-label="Channel Network" className="absolute top-[35px] left-[562px] w-[690px] rounded-[10px] border border-[#a8a8a8] bg-[#efefef] shadow-[0_12px_40px_rgba(0,0,0,0.35)]">
      <header className="flex h-[37px] items-center rounded-t-[10px] bg-[#f3f3f3] pr-[14px] pl-[9px] [font-family:'Open_Sans',sans-serif]">
        <QLogo s={20} />
        <h1 className="ml-[6px] flex-1 text-[14px] text-[#868686]">Channel Network</h1>
        <button aria-label="Close dialog"><Ic s={14} vb={14}><path d="M1 1l12 12M13 1L1 13" stroke="#777" strokeWidth="1.200" /></Ic></button>
      </header>
      <div className="px-[13px] py-[12px] text-[12px] [font-family:'DejaVu_Sans_Condensed','Noto_Sans',sans-serif]">
        <div role="tablist" className="flex items-end">
          <button role="tab" aria-selected="true" className="relative z-10 -mb-px h-[31px] w-[97px] rounded-t-[3px] border border-b-0 border-[#a9a9a9] bg-[#fcfcfc] pt-[2px]">Parameters</button>
          <button role="tab" aria-selected="false" className="h-[27px] w-[49px] rounded-tr-[3px] border border-b-0 border-l-0 border-[#b4b4b4] bg-[#e8e8e8] pt-[2px]">Log</button>
        </div>
        <div className="flex border border-[#a9a9a9] bg-[#efefef]">
          <div className="flex min-w-0 flex-1 flex-col">
            <div className="h-[8px] bg-[#fcfcfc]" />
            <div className="flex flex-col gap-[5px] pt-[2px] pr-[4px] pb-[8px] pl-[5px]">
              <Combo id="elevation" label="Elevation" value="ClipStudyFilledDEM [EPSG:32616]" />
              <Combo id="flow" label="Flow Direction [optional]" />
              <Combo id="grid" label="Initiation Grid" value="ClipStudyFilledDEM [EPSG:32616]" />
              <Combo id="type" label="Initiation Type" value="[2] Greater than" browse={false} />
              <Spin id="threshold" label="Initiation Threshold" value="0.000000" />
              <Combo id="divergence" label="Divergence [optional]" />
              <Spin id="maxdiv" label="Tracing: Max. Divergence" value="5" />
              <Combo id="weight" label="Tracing: Weight [optional]" />
              <Spin id="minseg" label="Min. Segment Length" value="6" clear />
              <Output id="channels" label="Channel Network" value="C:/Users/userone/Desktop/GIS5361/FloridaChannels.sdat" open />
              <Output id="direction" label="Channel Direction" open={false} />
              <Output id="network" label="Channel Network" />
            </div>
          </div>
          <div className="flex bg-[#fcfcfc] pt-[8px] pr-[1px]"><ScrollBar before="h-0" thumb="flex-1 border-b" after="h-[24px]" /></div>
        </div>
        <div className="mt-[32px] flex gap-[7px]">
          <div role="progressbar" aria-label="Progress" aria-valuenow={0} className={`flex h-6 flex-1 items-center justify-center bg-white ${boxBase}`}>0%</div>
          <button disabled className="h-[25px] w-[80px] rounded-[3px] border border-[#c4c4c4] bg-[#f4f4f4] text-[#8a8a8a]">Cancel</button>
        </div>
        <div className="mt-[7px] flex gap-[7px]">
          <button className={`${btn} flex w-[80px] items-center justify-center gap-[6px]`}>Advanced <Down w={9} /></button>
          <button className={`${btn} w-[142px]`}>Run as Batch Process…</button>
          <span className="flex-1" />
          <button className={`${btn} w-[80px]`}>Run</button>
          <button className={`${btn} w-[80px]`}>Close</button>
        </div>
      </div>
    </div>
  );
}

/* ---------- status bar ---------- */

function StatusBar() {
  const field = `flex h-[25px] shrink-0 items-center overflow-hidden bg-white ${boxBase}`;
  return (
    <footer className="flex h-[32px] shrink-0 items-center bg-[#efefef] pt-px pr-[7px] pl-[4px] text-[12px] [font-family:'DejaVu_Sans_Condensed','Noto_Sans',sans-serif]">
      <div className={`${field} w-[232px] gap-[8px] pl-[9px]`}>
        <SearchIc />
        <input aria-label="Locate" placeholder="Type to locate (Ctrl+K)" className="w-full outline-none placeholder:text-[#808080]" />
      </div>
      <label htmlFor="coord" className="ml-auto w-[65px]">Coordinate</label>
      <input id="coord" defaultValue="-9385261,3576632" className={`h-[25px] w-[122px] bg-[#f2f2f2] pl-[6px] ${boxBase}`} />
      <button aria-label="Toggle extents" className="mx-[4px] flex w-[20px] justify-center"><Ic s={18} vb={20}><path d="M3 3c2-3 7-2 7 1l5 9c2 4-3 7-6 4L3 8z" stroke="#111" strokeWidth="1.800" /><path d="M4 7l6-3M6 11l7-3M8 15l6-4M3 13c0 3 2 5 4 6M14 1v3M17 3l-3 3" stroke="#111" strokeWidth="1.400" /></Ic></button>
      <label htmlFor="scale" className="ml-[9px] w-[34px]">Scale</label>
      <div className={`${field} w-[93px]`}>
        <input id="scale" defaultValue="1:58051" className="min-w-0 flex-1 pl-[3px] outline-none" />
        <span className="flex h-full w-[24px] items-center justify-center bg-[#f4f4f4]"><Down /></span>
      </div>
      <button aria-label="Lock scale" className="mr-[9px] ml-[10px]"><Ic s={18} vb={18}><path d="M5 9V5a4 4 0 0 1 8 0v4" stroke="#8a8a8a" strokeWidth="1.800" /><path d="M2 8h14v10H2z" fill="#5c5c5c" /></Ic></button>
      <label htmlFor="mag" className="w-[56px]">Magnifier</label>
      <div className={`${field} w-[93px]`}><input id="mag" defaultValue="100%" className="min-w-0 flex-1 pl-[4px] outline-none" /><SpinArrows /></div>
      <label htmlFor="rot" className="ml-[9px] w-[56px]">Rotation</label>
      <div className={`${field} w-[89px]`}><input id="rot" defaultValue="0.0 °" className="min-w-0 flex-1 pl-[4px] outline-none" /><SpinArrows /></div>
      <div className="ml-[6px] flex items-center gap-[6px]"><Check id="render" checked /><label htmlFor="render" className="w-[41px]">Render</label></div>
      <button className="ml-[15px] flex items-center gap-[2px]">
        <Ic s={20} vb={20}><circle cx="10" cy="9" r="8" fill="#8a8a8a" /><path d="M2 9h16M10 1v17M4 4.500h12M4 13.500h12M10 1c-6 5-6 11 0 16M10 1c6 5 6 11 0 16" stroke="#efefef" strokeWidth=".9" /></Ic>
        <span className="w-[63px] text-left">EPSG:3857</span>
      </button>
      <button aria-label="Messages" className="ml-[25px]"><Ic s={20} vb={20}><path d="M10 1c6 0 9.500 3 9.500 7.500 0 3-1 4.500-3 6l1.500 4.500-5-3c-7 1-12.500-2-12.500-7.500C.5 4 4 1 10 1z" fill="#555" /><circle cx="6" cy="8.500" r="1.200" fill="#fff" /><circle cx="10" cy="8.500" r="1.200" fill="#fff" /><circle cx="14" cy="8.500" r="1.200" fill="#fff" /></Ic></button>
    </footer>
  );
}

/* ---------- taskbar ---------- */

function TaskButton({ label, children, dot = false }: Kids & { label: string; dot?: boolean }) {
  return (
    <button aria-label={label} className="relative flex h-full w-[55px] shrink-0 items-center justify-center">
      {children}
      {dot && <span className="absolute bottom-[6px] h-[4px] w-[8px] rounded-full bg-[#9aa0b4]" />}
    </button>
  );
}

function Taskbar() {
  return (
    <nav className="flex h-[60px] shrink-0 items-center border-t border-[#3a4660] bg-[linear-gradient(90deg,#1f2b33_0%,#20292f_17%,#12264a_20%,#0f2250_40%,#10224e_74%,#1c2a35_82%,#1c2830_100%)] text-[14px] text-white">
      <button aria-label="Weather" className="relative ml-[24px] flex w-[160px] items-center gap-[8px] pb-px text-left">
        <svg width="32" height="32" viewBox="0 0 32 32" aria-hidden="true"><defs><linearGradient id="cl" x1="0" y1="0" x2="0" y2="1"><stop offset="0" stopColor="#f1f6ff" /><stop offset="1" stopColor="#7fa9ea" /></linearGradient></defs><path d="M7 28a7 7 0 0 1 0-14c1-8 15-9 17 0a7 7 0 0 1 0 14z" fill="url(#cl)" /></svg>
        <span className="absolute -top-px left-[15px] flex h-5 w-5 items-center justify-center rounded-full bg-[#c42b1c] text-[12px]">1</span>
        <span className="leading-5"><span className="block">50°F</span><span className="block text-[#c8ccd0]">Cloudy</span></span>
      </button>
      <div className="ml-[333px] flex h-full items-center">
        <TaskButton label="Start"><Ic s={30} vb={30}><defs><linearGradient id="wn" x1="0" y1="0" x2="1" y2="1"><stop offset="0" stopColor="#7fe0ff" /><stop offset="1" stopColor="#0a9af5" /></linearGradient></defs><path d="M0 0h14v14H0zM15.500 0H30v14H15.500zM0 15.500h14V30H0zM15.500 15.500H30V30H15.500z" fill="url(#wn)" /></Ic></TaskButton>
        <div className="mr-[3px] ml-[5px] flex h-[38px] w-[273px] items-center overflow-hidden rounded-full bg-[#f1f2f5] pl-[13px]">
          <SearchIc s={20} c="#222" />
          <input aria-label="Search" placeholder="Search" className="ml-[12px] min-w-0 flex-1 text-[15px] outline-none placeholder:text-[#555]" />
          <svg width="60" height="36" viewBox="0 0 60 36" className="mr-[6px]" aria-hidden="true">
            <defs><radialGradient id="sky" cx=".5" cy=".9" r=".9"><stop offset="0" stopColor="#c9a8ec" /><stop offset=".7" stopColor="#bfe6fa" /><stop offset="1" stopColor="#e6f3fb" /></radialGradient></defs>
            <path d="M5 33C5 14 15 4 30 4s25 10 25 29z" fill="url(#sky)" />
            <path d="M2 33c0-6 7-8 12-10l7-4 8 4 8-5 8 5c6 2 13 3 13 8 0 3-10 4-28 4S2 35 2 33z" fill="#5b5488" />
            <g fill="#3b68d0"><circle cx="14" cy="15" r="1" /><circle cx="24" cy="8" r="1" /><circle cx="36" cy="10" r="1" /><circle cx="30" cy="14" r="1" /><circle cx="50" cy="25" r="1" /><circle cx="44" cy="14" r="1" /></g>
            <g fill="#e8b43a"><circle cx="20" cy="11" r="1" /><circle cx="40" cy="8" r="1" /><circle cx="10" cy="21" r="1" /><circle cx="47" cy="18" r="1" /><circle cx="30" cy="7" r="1" /></g>
          </svg>
        </div>
        <TaskButton label="Task view"><Ic s={30} vb={30}><path d="M0 9h22v18H0z" fill="#6b6b6b" /><path d="M8 1h22v20H8z" fill="#f2f2f2" /><path d="M8 9h14v12H8z" fill="#b5b5b5" /></Ic></TaskButton>
        <TaskButton label="Chat"><Ic s={30} vb={30}><path d="M15 1a14 14 0 1 1-6 26.500L2 29l1.500-6A14 14 0 0 1 15 1z" fill="#6660cc" /><rect x="7" y="10" width="11" height="10" rx="2" fill="#fff" /><path d="M19 13l4-3v10l-4-3z" fill="#fff" /></Ic></TaskButton>
        <TaskButton label="File Explorer" dot><Ic s={30} vb={30}><path d="M0 3c0-1 1-2 2-2h8l3 4v6H0z" fill="#e09a0f" /><path d="M0 7h30v20c0 1-1 2-2 2H2c-1 0-2-1-2-2z" fill="#fdc83f" /><path d="M5 23c0-2 1-2 2-2h16c1 0 2 0 2 2v6H5z" fill="#1674c9" /><path d="M9 25h12" stroke="#0a4f96" strokeWidth="1.500" /></Ic></TaskButton>
        <TaskButton label="Edge">
          <Ic s={30} vb={30}>
            <defs>
              <linearGradient id="ed" x1="0" y1="0" x2="1" y2="0"><stop offset="0" stopColor="#2aa8e0" /><stop offset=".6" stopColor="#38c6c0" /><stop offset="1" stopColor="#5fd86a" /></linearGradient>
            </defs>
            <circle cx="15" cy="15" r="14.500" fill="#1b7fd4" />
            <path d="M.8 13A14.500 14.500 0 0 1 29.500 15c0 4-3.500 6-7 6-3.500 0-5-1.500-4-3 1.500-3-.5-8-6-8.500C7 9 2.500 11 .8 13z" fill="url(#ed)" />
            <path d="M10.500 13c-4 6-.5 14 8 15.500 3.500-.7 6.500-3 8-5.500-6 3-14.500 1-14.500-6 0-2-.5-3.500-1.500-4z" fill="#0c4f9e" />
          </Ic>
        </TaskButton>
        <TaskButton label="Store"><Ic s={30} vb={30}><path d="M9 7V2h12v5" stroke="#2aa0ea" strokeWidth="2" /><rect x="1" y="6" width="28" height="24" rx="3" fill="#f5f5f5" /><path d="M9 12h5.500v5.500H9z" fill="#f0512b" /><path d="M15.500 12H21v5.500h-5.500z" fill="#7fba00" /><path d="M9 18.500h5.500V24H9z" fill="#00a4ef" /><path d="M15.500 18.500H21V24h-5.500z" fill="#ffb900" /></Ic></TaskButton>
        <TaskButton label="Firefox" dot><Ic s={30} vb={30}><defs><linearGradient id="ff" x1="1" y1="0" x2="0" y2="1"><stop offset="0" stopColor="#ffdf3a" /><stop offset=".5" stopColor="#ff8a1e" /><stop offset="1" stopColor="#e9184f" /></linearGradient></defs><path d="M2 8l3-4 2 3 4-1c2-2 5-5 6-6 1 4 10 7 11 16a13.500 13.500 0 1 1-26-8z" fill="url(#ff)" /><circle cx="14" cy="16" r="6.500" fill="#7a3cd0" /><path d="M5 10c3-2 7-1 10 1-4 0-5 3-8 2z" fill="#ff9a2a" /></Ic></TaskButton>
        <TaskButton label="Command Prompt"><Ic s={28} vb={28}><path d="M0 2h28v24H0z" fill="#0c0c0c" stroke="#999" /><path d="M0 2h28v3H0z" fill="#d8d8d8" /><path d="M3 9l3 1M8 8v3M10 11h6" stroke="#eee" /></Ic></TaskButton>
        <TaskButton label="Snipping Tool"><Ic s={30} vb={30}><rect x="1" y="1" width="22" height="23" rx="3" fill="#f4f4f4" /><path d="M5 5h13v14H5z" stroke="#d83b1c" strokeWidth="2.400" strokeDasharray="3.500 2" /><path d="M16 14l8 6M18 24l4-12" stroke="#bbb" strokeWidth="1.600" /><circle cx="26" cy="19" r="3" stroke="#1e90e0" strokeWidth="2" /><circle cx="17" cy="27" r="2.500" stroke="#1e90e0" strokeWidth="2" /></Ic></TaskButton>
        <TaskButton label="reMarkable"><span className="flex h-[29px] w-[29px] items-center justify-center rounded-full bg-[#1d1d1d] text-[11px] font-semibold">rM</span></TaskButton>
        <TaskButton label="QGIS" dot><QLogo s={30} /></TaskButton>
      </div>
      <div className="mr-[26px] ml-auto flex items-center">
        <Ic s={14} vb={14}><path d="M2 10l5-5 5 5" stroke="#fff" strokeWidth="1.600" /></Ic>
        <span className="ml-[22px]"><Ic s={20} vb={20}><path d="M1.500 8a12 12 0 0 1 17 0M4.500 11a8 8 0 0 1 11 0M7.200 13.800a4 4 0 0 1 5.600 0" stroke="#fff" strokeWidth="1.400" /><circle cx="10" cy="16.500" r="1.500" fill="#fff" /></Ic></span>
        <span className="ml-[11px]"><Ic s={20} vb={20}><path d="M1 7.500h3l5-4v13l-5-4H1z" stroke="#fff" strokeWidth="1.400" /><path d="M11.500 7.500a4 4 0 0 1 0 5M14 5.500a7 7 0 0 1 0 9M16.500 3.500a10 10 0 0 1 0 13" stroke="#fff" strokeWidth="1.300" /></Ic></span>
        <span className="ml-[10px]"><Ic s={20} vb={20}><rect x="1.500" y="6" width="15" height="10" rx="2" stroke="#fff" strokeWidth="1.400" /><path d="M4 8.500h10v5H4zM17.500 9h2v4h-2z" fill="#fff" /><path d="M4 1v5M1 5c0 4 6 4 6 0zM6.500 1v4" stroke="#fff" strokeWidth="1.400" /></Ic></span>
        <span className="mr-[2px] ml-[21px] pb-[2px] text-right leading-5"><span className="block">11:40 AM</span><span className="block">1/25/2024</span></span>
        <span className="ml-[9px]"><Ic s={18} vb={18}><path d="M9 0C5.500 0 3.500 2.500 3.500 6v5L1 14.500h16L14.500 11V6c0-3.500-2-6-5.500-6zM6.500 16h5c-.5 2.500-4.500 2.500-5 0z" fill="#8fe3fb" /></Ic></span>
      </div>
    </nav>
  );
}

/* ---------- window ---------- */

const menus: [string, string, string][] = [
  ["Pro", "j", "ect"], ["", "E", "dit"], ["", "V", "iew"], ["", "L", "ayer"], ["", "S", "ettings"], ["", "P", "lugins"], ["Vect", "o", "r"], ["", "R", "aster"], ["", "D", "atabase"], ["", "W", "eb"],
];

export default function App() {
  return (
    <div className="relative flex h-screen flex-col overflow-hidden bg-[#efefef] text-[14px] text-black [font-family:'Open_Sans',sans-serif]">
      <header className="flex h-[29px] shrink-0 items-center bg-[#f3f3f3] pl-[2px]">
        <QLogo s={20} />
        <span className="ml-[6px] flex-1 text-[#868686]">*FloridaTrainingWassershed — QGIS</span>
        <div className="flex items-center gap-[45px] pr-[26px]">
          <button aria-label="Minimize"><Ic s={12} vb={12}><path d="M0 6.500h12" stroke="#888" /></Ic></button>
          <button aria-label="Restore"><Ic s={13} vb={13}><rect x=".5" y="3" width="9" height="9.500" rx="1.500" stroke="#888" /><path d="M3 3V2c0-1 .5-1.500 1.500-1.500H11c1 0 1.500.5 1.500 1.500v7c0 1-1 1.500-2.500 1.500" stroke="#888" /></Ic></button>
          <button aria-label="Close window"><Ic s={13} vb={13}><path d="M.5.5l12 12M12.500.5l-12 12" stroke="#888" /></Ic></button>
        </div>
      </header>
      <nav className="flex h-[25px] shrink-0 items-center gap-[15px] border-b border-[#cfcfcf] pl-[11px] text-[#9a9a9a]">
        {menus.map(([a, u, b]) => (
          <button key={a + u + b}>{a}<span className="underline underline-offset-2">{u}</span>{b}</button>
        ))}
      </nav>
      <Toolbars />
      <div className="flex min-h-0 flex-1 gap-[7px] pt-[1px]">
        <div className="flex w-[279px] shrink-0 flex-col">
          <Browser />
          <Layers />
        </div>
        <MapCanvas />
        <Toolbox />
      </div>
      <StatusBar />
      <Taskbar />
      <Dialog />
    </div>
  );
}
